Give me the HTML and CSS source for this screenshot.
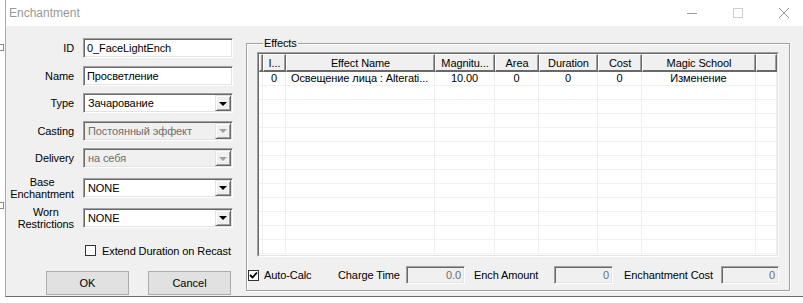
FILE: index.html
```html
<!DOCTYPE html>
<html lang="en">
<head>
    <meta charset="UTF-8">
    <title>Enchantment</title>
    <link rel="stylesheet" href="styles.css">
</head>
<body>
    <div class="desktop">
        <div class="outside-strip">
            <span class="tree-box"></span>
            <span class="tree-box lower"></span>
        </div>
        <div class="window">
            <div class="titlebar">
                <span class="title">Enchantment</span>
                <div class="caption-buttons">
                    <span class="caption-btn">
                        <svg width="10" height="10" viewBox="0 0 10 10"><path d="M0 5.5h10" stroke="#999" stroke-width="1"/></svg>
                    </span>
                    <span class="caption-btn">
                        <svg width="10" height="10" viewBox="0 0 10 10"><rect x="0.5" y="0.5" width="9" height="9" fill="none" stroke="#ccc" stroke-width="1"/></svg>
                    </span>
                    <span class="caption-btn">
                        <svg width="10" height="10" viewBox="0 0 10 10"><path d="M0 0L10 10M10 0L0 10" stroke="#999" stroke-width="1"/></svg>
                    </span>
                </div>
            </div>

            <div class="client">
                <div class="left-panel">
                    <div class="field">
                        <span class="field-label">ID</span>
                        <div class="edit">0_FaceLightEnch</div>
                    </div>
                    <div class="field">
                        <span class="field-label">Name</span>
                        <div class="edit">Просветление</div>
                    </div>
                    <div class="field">
                        <span class="field-label">Type</span>
                        <div class="combo">
                            <span class="combo-text">Зачарование</span>
                            <span class="combo-arrow"><span class="tri"></span></span>
                        </div>
                    </div>
                    <div class="field">
                        <span class="field-label">Casting</span>
                        <div class="combo disabled">
                            <span class="combo-text">Постоянный эффект</span>
                            <span class="combo-arrow"><span class="tri"></span></span>
                        </div>
                    </div>
                    <div class="field">
                        <span class="field-label">Delivery</span>
                        <div class="combo disabled">
                            <span class="combo-text">на себя</span>
                            <span class="combo-arrow"><span class="tri"></span></span>
                        </div>
                    </div>
                    <div class="field base">
                        <span class="field-label two-line">Base<br>Enchantment</span>
                        <div class="combo">
                            <span class="combo-text">NONE</span>
                            <span class="combo-arrow"><span class="tri"></span></span>
                        </div>
                    </div>
                    <div class="field worn">
                        <span class="field-label two-line">Worn<br>Restrictions</span>
                        <div class="combo">
                            <span class="combo-text">NONE</span>
                            <span class="combo-arrow"><span class="tri"></span></span>
                        </div>
                    </div>
                    <label class="check-row">
                        <span class="checkbox"></span>
                        <span>Extend Duration on Recast</span>
                    </label>
                    <div class="button-row">
                        <button class="push-btn">OK</button>
                        <button class="push-btn">Cancel</button>
                    </div>
                </div>

                <fieldset class="effects">
                    <legend>Effects</legend>
                    <div class="list">
                        <div class="list-inner">
                            <table class="effects-table">
                                <colgroup>
                                    <col style="width:4px">
                                    <col style="width:23px">
                                    <col style="width:149px">
                                    <col style="width:60px">
                                    <col style="width:44px">
                                    <col style="width:59px">
                                    <col style="width:44px">
                                    <col style="width:114px">
                                    <col>
                                </colgroup>
                                <thead>
                                    <tr>
                                        <th></th>
                                        <th>I...</th>
                                        <th>Effect Name</th>
                                        <th>Magnitu...</th>
                                        <th>Area</th>
                                        <th>Duration</th>
                                        <th>Cost</th>
                                        <th>Magic School</th>
                                        <th></th>
                                    </tr>
                                </thead>
                                <tbody id="rows">
                                    <tr>
                                        <td></td>
                                        <td>0</td>
                                        <td class="left">Освещение лица : Alterati...</td>
                                        <td>10.00</td>
                                        <td>0</td>
                                        <td>0</td>
                                        <td>0</td>
                                        <td>Изменение</td>
                                        <td></td>
                                    </tr>
                                </tbody>
                            </table>
                        </div>
                    </div>
                    <div class="calc-row">
                        <label class="auto-calc">
                            <span class="checkbox checked">
                                <svg width="9" height="9" viewBox="0 0 9 9"><path d="M1 4l2.5 2.5L8 1.5" fill="none" stroke="#000" stroke-width="1.8"/></svg>
                            </span>
                            <span>Auto-Calc</span>
                        </label>
                        <span class="calc-label">Charge Time</span>
                        <div class="readout">0.0</div>
                        <span class="calc-label pad9">Ench Amount</span>
                        <div class="readout">0</div>
                        <span class="calc-label pad11">Enchantment Cost</span>
                        <div class="readout">0</div>
                    </div>
                </fieldset>
            </div>
        </div>
    </div>
    <script>
        // fill the empty grid rows of the list view
        const rows = document.getElementById('rows');
        for (let i = 0; i < 12; i++) {
            const tr = document.createElement('tr');
            for (let j = 0; j < 9; j++) {
                tr.appendChild(document.createElement('td'));
            }
            rows.appendChild(tr);
        }
    </script>
</body>
</html>
```

FILE: styles.css
```css
* {
    box-sizing: border-box;
}
body {
    margin: 0;
    background: #ffffff;
    font-family: "Liberation Sans", Arial, sans-serif;
    font-size: 11px;
    letter-spacing: -0.1px;
    color: #000;
    overflow: hidden;
}
.desktop {
    width: 803px;
    height: 303px;
    display: flex;
    overflow: hidden;
}
.outside-strip {
    width: 5px;
    flex-shrink: 0;
    display: flex;
    flex-direction: column;
    padding-top: 44px;
}
.tree-box {
    width: 4px;
    height: 7px;
    border: 1px solid #888;
    border-left: none;
}
.tree-box.lower {
    margin-top: 151px;
}
.window {
    width: 802px;
    height: 297px;
    flex-shrink: 0;
    border-left: 1px solid #aaaaaa;
    border-bottom: 1px solid #6b6b6b;
    background: #f0f0f0;
    display: flex;
    flex-direction: column;
}
.titlebar {
    height: 26px;
    background: #fff;
    display: flex;
    align-items: center;
    padding-left: 3px;
}
.title {
    font-size: 12px;
    letter-spacing: 0;
    color: #999;
}
.caption-buttons {
    margin-left: auto;
    display: flex;
}
.caption-btn {
    width: 46px;
    height: 26px;
    display: flex;
    align-items: center;
    justify-content: center;
}
.client {
    flex: 1;
    display: flex;
}
.left-panel {
    width: 240px;
    display: flex;
    flex-direction: column;
    padding-top: 12px;
}
.field {
    display: grid;
    grid-template-columns: 68px 150px;
    column-gap: 9px;
    align-items: center;
    height: 20px;
    margin-bottom: 7.5px;
}
.field.base {
    margin-bottom: 10px;
}
.field.worn {
    margin-bottom: 0;
}
.field-label {
    text-align: right;
    white-space: nowrap;
}
.two-line {
    justify-self: end;
    text-align: center;
    line-height: 12px;
}
.edit {
    height: 20px;
    background: #fff;
    border: 1px solid;
    border-color: #a0a0a0 #fff #fff #a0a0a0;
    box-shadow: inset 1px 1px #696969, inset -1px -1px #e3e3e3;
    padding: 3px 3px 0;
    white-space: nowrap;
    overflow: hidden;
}
.combo {
    height: 20px;
    background: #fff;
    border: 1px solid;
    border-color: #a0a0a0 #fff #fff #a0a0a0;
    box-shadow: inset 1px 1px #696969, inset -1px -1px #e3e3e3;
    display: flex;
    align-items: center;
    padding: 1px 1px 1px 4px;
}
.combo.disabled {
    background: #f0f0f0;
    color: #6d6d6d;
}
.combo-text {
    flex: 1;
    white-space: nowrap;
}
.combo-arrow {
    width: 16px;
    height: 16px;
    background: #f0f0f0;
    border: 1px solid;
    border-color: #e3e3e3 #696969 #696969 #e3e3e3;
    box-shadow: inset 1px 1px #fff, inset -1px -1px #a0a0a0;
    display: flex;
    align-items: center;
    justify-content: center;
}
.tri {
    width: 0;
    height: 0;
    border-left: 4px solid transparent;
    border-right: 4px solid transparent;
    border-top: 4px solid #000;
    margin-top: 1px;
}
.combo.disabled .tri {
    border-top-color: #a0a0a0;
}
.check-row {
    display: flex;
    align-items: center;
    margin: 19px 0 0 79px;
    gap: 6px;
    height: 12px;
}
.checkbox {
    width: 11px;
    height: 11px;
    border: 1px solid #333;
    background: #fff;
    display: flex;
    align-items: center;
    justify-content: center;
}
.button-row {
    display: flex;
    gap: 19px;
    margin: 14px 0 0 40px;
}
.push-btn {
    width: 83px;
    height: 24px;
    font: inherit;
    background: #e1e1e1;
    border: 1px solid #adadad;
    padding: 0;
    color: #000;
}
.effects {
    width: 544px;
    height: 254px;
    margin: 11px 0 0 0;
    padding: 2px 10px 0 10px;
    border: 1px solid #a0a0a0;
    box-shadow: 1px 1px #fff, inset 1px 1px #fff;
}
.effects legend {
    padding: 0 1px;
    margin-left: 6px;
    line-height: 13px;
}
.list {
    height: 205px;
    border: 1px solid;
    border-color: #a0a0a0 #fff #fff #a0a0a0;
}
.list-inner {
    height: 100%;
    border: 1px solid;
    border-color: #696969 #e3e3e3 #e3e3e3 #696969;
    background: #fff;
    overflow: hidden;
}
.effects-table {
    width: 518px;
    table-layout: fixed;
    border-collapse: separate;
    border-spacing: 0;
}
.effects-table th {
    height: 18px;
    padding: 0;
    font-weight: normal;
    background: #f0f0f0;
    border-top: 1px solid #fff;
    border-left: 1px solid #fff;
    border-right: 1px solid #696969;
    border-bottom: 2px solid #696969;
    box-shadow: inset -1px 0 #a0a0a0;
    white-space: nowrap;
    overflow: hidden;
}
.effects-table td {
    height: 14px;
    padding: 0;
    text-align: center;
    border-right: 1px solid #f0f0f0;
    border-bottom: 1px solid #f0f0f0;
    white-space: nowrap;
    overflow: hidden;
    line-height: 13px;
}
.effects-table td.left {
    text-align: left;
    padding-left: 5px;
}
.calc-row {
    display: grid;
    grid-template-columns: 90px 68px 59px 89px 59px 108px 58px;
    align-items: center;
    margin: 9px 0 0 -9px;
    height: 18px;
}
.auto-calc {
    display: flex;
    align-items: center;
    gap: 5px;
}
.calc-label {
    white-space: nowrap;
}
.calc-label.pad9 {
    padding-left: 9px;
}
.calc-label.pad11 {
    padding-left: 11px;
}
.readout {
    height: 18px;
    border: 1px solid;
    border-color: #a0a0a0 #fff #fff #a0a0a0;
    box-shadow: inset 1px 1px #696969, inset -1px -1px #e3e3e3;
    text-align: right;
    color: #6d6d6d;
    padding: 2px 3px 0;
}
```
